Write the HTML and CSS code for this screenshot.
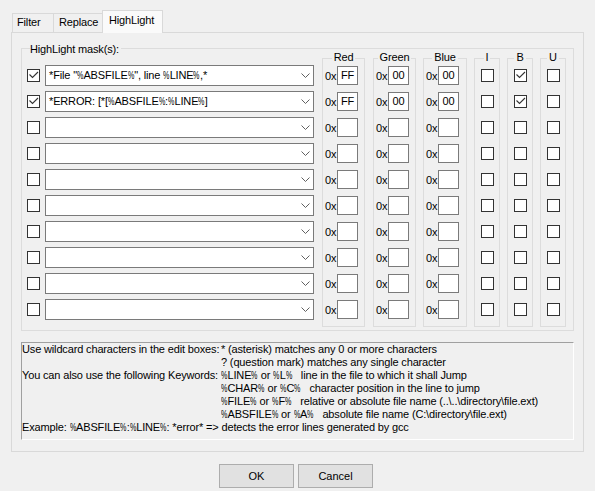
FILE: index.html
```html
<!DOCTYPE html>
<html>
<head>
<meta charset="utf-8">
<title>HighLight</title>
<link rel="stylesheet" href="styles.css">
</head>
<body>
<div class="dialog">
  <div class="tabs">
    <div class="tab t-filter">Filter</div>
    <div class="tab t-replace">Replace</div>
    <div class="tab t-high active">HighLight</div>
  </div>
  <div class="panel">
    <div class="group">
      <div class="ghead"><span class="glabel">HighLight mask(s):</span></div>
      <div class="gbody">
        <div class="masks">
          <div class="row"><span class="cb"><svg viewBox="0 0 11 11"><path d="M1.5 4.5 L4.5 7.5 L10 2"/></svg></span><div class="combo"><span class="ctext">*File "<span class="pc">%</span>ABSFILE<span class="pc">%</span>", line <span class="pc">%</span>LINE<span class="pc">%</span>,*</span><svg class="chev" viewBox="0 0 9 5"><path d="M0.5 0.5 L4.5 4.5 L8.5 0.5"/></svg></div></div>
          <div class="row"><span class="cb"><svg viewBox="0 0 11 11"><path d="M1.5 4.5 L4.5 7.5 L10 2"/></svg></span><div class="combo"><span class="ctext">*ERROR: [*[<span class="pc">%</span>ABSFILE<span class="pc">%</span>:<span class="pc">%</span>LINE<span class="pc">%</span>]</span><svg class="chev" viewBox="0 0 9 5"><path d="M0.5 0.5 L4.5 4.5 L8.5 0.5"/></svg></div></div>
          <div class="row"><span class="cb"></span><div class="combo"><span class="ctext"></span><svg class="chev" viewBox="0 0 9 5"><path d="M0.5 0.5 L4.5 4.5 L8.5 0.5"/></svg></div></div>
          <div class="row"><span class="cb"></span><div class="combo"><span class="ctext"></span><svg class="chev" viewBox="0 0 9 5"><path d="M0.5 0.5 L4.5 4.5 L8.5 0.5"/></svg></div></div>
          <div class="row"><span class="cb"></span><div class="combo"><span class="ctext"></span><svg class="chev" viewBox="0 0 9 5"><path d="M0.5 0.5 L4.5 4.5 L8.5 0.5"/></svg></div></div>
          <div class="row"><span class="cb"></span><div class="combo"><span class="ctext"></span><svg class="chev" viewBox="0 0 9 5"><path d="M0.5 0.5 L4.5 4.5 L8.5 0.5"/></svg></div></div>
          <div class="row"><span class="cb"></span><div class="combo"><span class="ctext"></span><svg class="chev" viewBox="0 0 9 5"><path d="M0.5 0.5 L4.5 4.5 L8.5 0.5"/></svg></div></div>
          <div class="row"><span class="cb"></span><div class="combo"><span class="ctext"></span><svg class="chev" viewBox="0 0 9 5"><path d="M0.5 0.5 L4.5 4.5 L8.5 0.5"/></svg></div></div>
          <div class="row"><span class="cb"></span><div class="combo"><span class="ctext"></span><svg class="chev" viewBox="0 0 9 5"><path d="M0.5 0.5 L4.5 4.5 L8.5 0.5"/></svg></div></div>
          <div class="row"><span class="cb"></span><div class="combo"><span class="ctext"></span><svg class="chev" viewBox="0 0 9 5"><path d="M0.5 0.5 L4.5 4.5 L8.5 0.5"/></svg></div></div>
        </div>

        <div class="col wide c-red">
          <div class="chead"><span class="clabel">Red</span></div>
          <div class="cbody">
            <div class="hrow"><span class="ox">0x</span><span class="hexbox">FF</span></div>
            <div class="hrow"><span class="ox">0x</span><span class="hexbox">FF</span></div>
            <div class="hrow"><span class="ox">0x</span><span class="hexbox"></span></div>
            <div class="hrow"><span class="ox">0x</span><span class="hexbox"></span></div>
            <div class="hrow"><span class="ox">0x</span><span class="hexbox"></span></div>
            <div class="hrow"><span class="ox">0x</span><span class="hexbox"></span></div>
            <div class="hrow"><span class="ox">0x</span><span class="hexbox"></span></div>
            <div class="hrow"><span class="ox">0x</span><span class="hexbox"></span></div>
            <div class="hrow"><span class="ox">0x</span><span class="hexbox"></span></div>
            <div class="hrow"><span class="ox">0x</span><span class="hexbox"></span></div>
          </div>
        </div>

        <div class="col wide c-green">
          <div class="chead"><span class="clabel">Green</span></div>
          <div class="cbody">
            <div class="hrow"><span class="ox">0x</span><span class="hexbox">00</span></div>
            <div class="hrow"><span class="ox">0x</span><span class="hexbox">00</span></div>
            <div class="hrow"><span class="ox">0x</span><span class="hexbox"></span></div>
            <div class="hrow"><span class="ox">0x</span><span class="hexbox"></span></div>
            <div class="hrow"><span class="ox">0x</span><span class="hexbox"></span></div>
            <div class="hrow"><span class="ox">0x</span><span class="hexbox"></span></div>
            <div class="hrow"><span class="ox">0x</span><span class="hexbox"></span></div>
            <div class="hrow"><span class="ox">0x</span><span class="hexbox"></span></div>
            <div class="hrow"><span class="ox">0x</span><span class="hexbox"></span></div>
            <div class="hrow"><span class="ox">0x</span><span class="hexbox"></span></div>
          </div>
        </div>

        <div class="col wide c-blue">
          <div class="chead"><span class="clabel">Blue</span></div>
          <div class="cbody">
            <div class="hrow"><span class="ox">0x</span><span class="hexbox">00</span></div>
            <div class="hrow"><span class="ox">0x</span><span class="hexbox">00</span></div>
            <div class="hrow"><span class="ox">0x</span><span class="hexbox"></span></div>
            <div class="hrow"><span class="ox">0x</span><span class="hexbox"></span></div>
            <div class="hrow"><span class="ox">0x</span><span class="hexbox"></span></div>
            <div class="hrow"><span class="ox">0x</span><span class="hexbox"></span></div>
            <div class="hrow"><span class="ox">0x</span><span class="hexbox"></span></div>
            <div class="hrow"><span class="ox">0x</span><span class="hexbox"></span></div>
            <div class="hrow"><span class="ox">0x</span><span class="hexbox"></span></div>
            <div class="hrow"><span class="ox">0x</span><span class="hexbox"></span></div>
          </div>
        </div>

        <div class="col narrow">
          <div class="chead"><span class="clabel">I</span></div>
          <div class="cbody">
            <div class="brow"><span class="cb"></span></div>
            <div class="brow"><span class="cb"></span></div>
            <div class="brow"><span class="cb"></span></div>
            <div class="brow"><span class="cb"></span></div>
            <div class="brow"><span class="cb"></span></div>
            <div class="brow"><span class="cb"></span></div>
            <div class="brow"><span class="cb"></span></div>
            <div class="brow"><span class="cb"></span></div>
            <div class="brow"><span class="cb"></span></div>
            <div class="brow"><span class="cb"></span></div>
          </div>
        </div>

        <div class="col narrow">
          <div class="chead"><span class="clabel">B</span></div>
          <div class="cbody">
            <div class="brow"><span class="cb"><svg viewBox="0 0 11 11"><path d="M1.5 4.5 L4.5 7.5 L10 2"/></svg></span></div>
            <div class="brow"><span class="cb"><svg viewBox="0 0 11 11"><path d="M1.5 4.5 L4.5 7.5 L10 2"/></svg></span></div>
            <div class="brow"><span class="cb"></span></div>
            <div class="brow"><span class="cb"></span></div>
            <div class="brow"><span class="cb"></span></div>
            <div class="brow"><span class="cb"></span></div>
            <div class="brow"><span class="cb"></span></div>
            <div class="brow"><span class="cb"></span></div>
            <div class="brow"><span class="cb"></span></div>
            <div class="brow"><span class="cb"></span></div>
          </div>
        </div>

        <div class="col narrow">
          <div class="chead"><span class="clabel">U</span></div>
          <div class="cbody">
            <div class="brow"><span class="cb"></span></div>
            <div class="brow"><span class="cb"></span></div>
            <div class="brow"><span class="cb"></span></div>
            <div class="brow"><span class="cb"></span></div>
            <div class="brow"><span class="cb"></span></div>
            <div class="brow"><span class="cb"></span></div>
            <div class="brow"><span class="cb"></span></div>
            <div class="brow"><span class="cb"></span></div>
            <div class="brow"><span class="cb"></span></div>
            <div class="brow"><span class="cb"></span></div>
          </div>
        </div>
      </div>
    </div>

    <div class="info">
      <span>Use wildcard characters in the edit boxes:</span><span>* (asterisk) matches any 0 or more characters</span>
      <span></span><span>? (question mark) matches any single character</span>
      <span>You can also use the following Keywords:</span><span><span class="pc">%</span>LINE<span class="pc">%</span> or <span class="pc">%</span>L<span class="pc">%</span>   line in the file to which it shall Jump</span>
      <span></span><span><span class="pc">%</span>CHAR<span class="pc">%</span> or <span class="pc">%</span>C<span class="pc">%</span>   character position in the line to jump</span>
      <span></span><span><span class="pc">%</span>FILE<span class="pc">%</span> or <span class="pc">%</span>F<span class="pc">%</span>   relative or absolute file name (..\..\directory\file.ext)</span>
      <span></span><span><span class="pc">%</span>ABSFILE<span class="pc">%</span> or <span class="pc">%</span>A<span class="pc">%</span>   absolute file name (C:\directory\file.ext)</span>
      <span class="full">Example: <span class="pc">%</span>ABSFILE<span class="pc">%</span>:<span class="pc">%</span>LINE<span class="pc">%</span>: *error* =&gt; detects the error lines generated by gcc</span>
    </div>
  </div>

  <div class="buttons">
    <button class="btn">OK</button>
    <button class="btn">Cancel</button>
  </div>
</div>
</body>
</html>
```

FILE: styles.css
```css
* { box-sizing: border-box; }

html, body {
  margin: 0;
  padding: 0;
  background: #f0f0f0;
}

body {
  width: 595px;
  height: 491px;
  overflow: hidden;
  font-family: "Liberation Sans", Arial, sans-serif;
  font-size: 11px;
  letter-spacing: -0.15px;
  color: #000;
}

/* narrow percent sign, like the dialog's bitmap font */
.pc {
  display: inline-block;
  width: 6.5px;
  font-size: 10.5px;
  letter-spacing: 0;
  transform: scaleX(0.68);
  transform-origin: left center;
}

.dialog {
  padding: 10px 11px 0 11px;
}

/* ---------- tabs ---------- */
.tabs {
  display: flex;
  align-items: flex-end;
  height: 22px;
  padding-left: 1px;
}

.tab {
  height: 19px;
  line-height: 16px;
  border-top: 1px solid #d9d9d9;
  border-left: 1px solid #d9d9d9;
  background: #f0f0f0;
  white-space: nowrap;
}

.t-filter { width: 41px; padding-left: 4px; }
.t-replace { width: 49px; padding-left: 5px; }

.tab.active {
  width: 61px;
  height: 23px;
  line-height: 18px;
  padding-left: 6px;
  border-right: 1px solid #d9d9d9;
  background: #fafafa;
  margin-bottom: -1px;
  position: relative;
  z-index: 1;
}

/* ---------- panel ---------- */
.panel {
  border: 1px solid #d9d9d9;
  background: #f0f0f0;
  padding: 10px 9px 11px 9px;
}

/* ---------- group box ---------- */
.ghead {
  display: flex;
  height: 13px;
}

.ghead::before,
.ghead::after {
  content: "";
  align-self: flex-end;
  height: 7px;
  border-top: 1px solid #dcdcdc;
}

.ghead::before {
  width: 8px;
  border-left: 1px solid #dcdcdc;
}

.ghead::after {
  flex: 1;
  border-right: 1px solid #dcdcdc;
}

.glabel {
  line-height: 13px;
  padding: 0 2px 0 0;
}

.gbody {
  display: flex;
  align-items: flex-start;
  border: 1px solid #dcdcdc;
  border-top: none;
  padding: 0 7px 3px 5px;
}

.masks {
  margin-top: 6px;
}

.row {
  display: flex;
  align-items: center;
  gap: 5px;
  height: 26px;
}

.cb {
  width: 13px;
  height: 13px;
  border: 1px solid #333;
  background: #fff;
  display: block;
  flex: none;
}

.cb svg {
  display: block;
  width: 11px;
  height: 11px;
  fill: none;
  stroke: #333;
  stroke-width: 1.1;
}

.combo {
  width: 269px;
  height: 21px;
  border: 1px solid #7a7a7a;
  background: #fff;
  display: flex;
  align-items: center;
  justify-content: space-between;
  padding: 0 3px 0 3px;
}

.ctext {
  white-space: pre;
  line-height: 19px;
}

.chev {
  width: 9px;
  height: 5px;
  fill: none;
  stroke: #606060;
  stroke-width: 1;
}

/* ---------- columns ---------- */
.col {
  margin-top: -3px;
  margin-left: 7px;
}

.col.c-red { margin-left: 8px; }
.col.c-green { margin-left: 8px; }

.col.wide { width: 43px; }
.col.c-blue { width: 44px; }
.col.narrow { width: 26px; }

.chead {
  display: flex;
  height: 9px;
}

.chead::before,
.chead::after {
  content: "";
  flex: 1;
  align-self: flex-end;
  height: 3px;
  border-top: 1px solid #dcdcdc;
}

.chead::before { border-left: 1px solid #dcdcdc; }
.chead::after { border-right: 1px solid #dcdcdc; }

.clabel {
  line-height: 9px;
  padding: 0 2px;
  white-space: nowrap;
}

.cbody {
  border: 1px solid #dcdcdc;
  border-top: none;
  padding-bottom: 4px;
}

.hrow {
  display: flex;
  align-items: center;
  height: 26px;
  padding: 1px 0 0 2px;
}

.ox {
  width: 12px;
  flex: none;
}

.hexbox {
  width: 21px;
  height: 19px;
  border: 1px solid #7a7a7a;
  background: #fff;
  text-align: center;
  line-height: 17px;
  flex: none;
}

.brow {
  display: flex;
  align-items: center;
  justify-content: center;
  height: 26px;
  padding-left: 1px;
}

/* ---------- info text ---------- */
.info {
  margin-top: 11px;
  border-top: 1px solid #a0a0a0;
  border-left: 1px solid #a0a0a0;
  border-right: 1px solid #ffffff;
  border-bottom: 1px solid #ffffff;
  display: grid;
  grid-template-columns: 199px 1fr;
  line-height: 13px;
  padding: 0 0 5px 0;
  white-space: pre;
}

.info .full {
  grid-column: 1 / 3;
}

/* ---------- buttons ---------- */
.buttons {
  display: flex;
  justify-content: center;
  gap: 4px;
  margin-top: 12px;
  padding-right: 3px;
}

.btn {
  width: 75px;
  height: 24px;
  border: 1px solid #adadad;
  background: #e1e1e1;
  font-family: "Liberation Sans", Arial, sans-serif;
  font-size: 11px;
  color: #000;
  padding: 0;
}
```
